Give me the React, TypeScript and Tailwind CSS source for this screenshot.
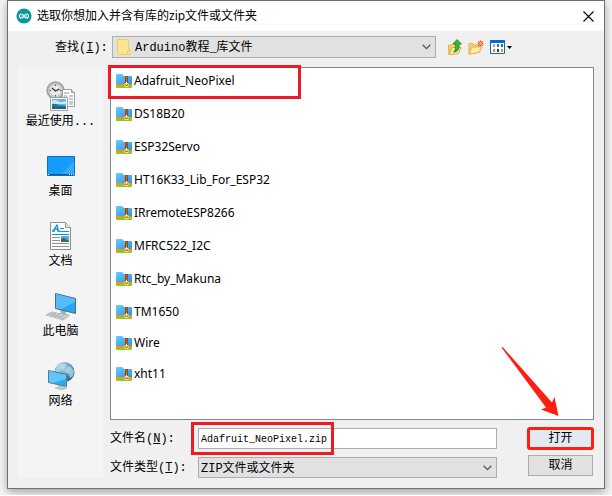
import type { ReactNode } from 'react';

const mono = "font-['Liberation_Mono','Noto_Sans_CJK_SC',monospace]";

function ArduinoLogo() {
  return (
    <svg className="size-4 shrink-0" viewBox="0 0 16 16" aria-hidden="true">
      <circle cx="8" cy="8" r="7.6" fill="#0a979b" />
      <circle cx="5.4" cy="8" r="2" fill="none" stroke="#fff" strokeWidth="1.1" />
      <circle cx="10.6" cy="8" r="2" fill="none" stroke="#fff" strokeWidth="1.1" />
      <path d="M4.600 8h1.600M9.800 8h1.600M10.600 7.200v1.600" stroke="#d7f0f0" strokeWidth=".6" />
    </svg>
  );
}

function Chevron() {
  return (
    <svg className="pointer-events-none absolute right-[5px] top-2 h-[6px] w-[9px]" viewBox="0 0 9 6" aria-hidden="true">
      <path d="M.7 .8 4.5 4.6 8.3 .8" fill="none" stroke="#555" strokeWidth="1.3" />
    </svg>
  );
}

function FolderIcon() {
  return (
    <svg className="pointer-events-none absolute left-[5px] top-[3px] h-4 w-[14px]" viewBox="0 0 14 16" aria-hidden="true">
      <path d="M.5 .5h11v10l1.500 1v4H.5z" fill="#ffe48f" stroke="#efcb62" />
      <path d="M10.500 15.500v-4l2.500-1" fill="none" stroke="#efcb62" />
    </svg>
  );
}

function ZipIcon() {
  return (
    <svg className="h-[14px] w-4 shrink-0" viewBox="0 0 16 14" aria-hidden="true">
      <defs>
        <linearGradient id="zipBlue" x1="0" y1="0" x2="1" y2="1">
          <stop offset="0" stopColor="#69cbfb" />
          <stop offset="1" stopColor="#2d95e5" />
        </linearGradient>
      </defs>
      <path d="M0 1q0-1 1-1h5l2 2h7q1 0 1 1v7H0z" fill="url(#zipBlue)" />
      <path d="M0 10h16v2H0z" fill="#f6920f" />
      <path d="M0 12h16v1q0 1-1 1H1q-1 0-1-1z" fill="#83cc2c" />
      <path d="M9 2h3v11H9z" fill="#9b4b12" />
      <path d="M10 3h1v1h-1zm0 2h1v1h-1zm0 2h1v1h-1z" fill="#c97a35" />
      <path d="M9 9.500h3v3H9z" fill="#8d5a19" stroke="#ffdf80" />
      <path d="M10 8h1v3h-1z" fill="#fff0ad" />
    </svg>
  );
}

function RecentIcon() {
  return (
    <svg className="size-8" viewBox="0 0 32 32" aria-hidden="true">
      <circle cx="10.500" cy="10.500" r="8.200" fill="#dcdeda" stroke="#a0a4a3" strokeWidth="2" />
      <circle cx="10.500" cy="10.500" r="6" fill="#e9e9e5" stroke="#bfc2c0" />
      <path d="M10.500 4.500v1.500M4.500 10.500H6M15 10.500h1.500M10.500 15v1.500" stroke="#555" />
      <path d="m7 8 3.500 3 4-2" fill="none" stroke="#333" strokeWidth="1.300" />
      <path d="M17.500 9.500h9l3 3v14h-12z" fill="#fff" stroke="#9a9da0" />
      <path d="M26.500 9.500v3h3" fill="#ddd" stroke="#9a9da0" />
      <path d="M19 13h5M19 16h3m2 0h4m-9 3h4m1 0h4m-4 3h4m-4 2h4" stroke="#8894a2" />
      <path d="M5.500 17.500h17v13h-17z" fill="#fff" stroke="#a2a2a2" />
      <path d="M7 19h14v10H7z" fill="#66b2e6" />
      <path d="M7 21q3-2 6 0t8 0v3H7z" fill="#c8e9f5" />
      <path d="M7 24q3-1 6 1l8 1v3H7z" fill="#287b77" />
      <path d="M7 27h14v2H7z" fill="#1e5c98" />
    </svg>
  );
}

function DesktopIcon() {
  return (
    <svg className="size-8" viewBox="0 0 32 32" aria-hidden="true">
      <path d="M2.500 6.500h27v19h-27z" fill="#169dfa" stroke="#0872bd" />
      <path d="M16 25 29 11v14z" fill="#35acfb" />
      <path d="M3 24h26v1H3z" fill="#075d9f" />
      <path d="M3 24.500h1m20 0h1m1 0h1m1 0h1" stroke="#fff" />
    </svg>
  );
}

function DocumentIcon() {
  return (
    <svg className="size-8" viewBox="0 0 32 32" aria-hidden="true">
      <path d="M5.500 2.500h15l5 5v22h-20z" fill="#fff" stroke="#8d8d8d" />
      <path d="M20.500 2.500v5h5" fill="#e3e3e3" stroke="#999" />
      <path d="m8 11 4-6 1.500 6M9 9h4M7 11h3m2 0h3" fill="none" stroke="#168ddb" strokeWidth="1.300" />
      <path d="M15 8.500h4m-4 3h9M7 14.500h17" stroke="#168ddb" />
      <path d="M7 17.500h8m-8 3h8m-8 3h17m-17 3h17" stroke="#929292" />
      <path d="M16 16h8v6h-8z" fill="#62a6d9" />
      <path d="m16 19 3-1 5 3v1h-8z" fill="#366a58" />
    </svg>
  );
}

function ComputerIcon() {
  return (
    <svg className="size-8" viewBox="0 0 32 32" aria-hidden="true">
      <path d="m15 20 6 1v3l4 1-6 2-6-3 3-1z" fill="#a9b0b5" />
      <path d="m10.500 3.500 20 5v15l-20-5z" fill="#28a6f4" stroke="#536b7b" />
      <path d="m11 4 19 5v3L16 19l-5-1z" fill="#54bdfb" />
      <path d="m1 25 6-3 17 4-6 4z" fill="#dce0e2" stroke="#b4babd" />
      <path d="m3 24 16 5M5 23l16 5M5 26l6-3m-2 4 6-3m-2 4 6-3" stroke="#a5abaf" strokeWidth=".8" />
    </svg>
  );
}

function NetworkIcon() {
  return (
    <svg className="size-8" viewBox="0 0 32 32" aria-hidden="true">
      <defs>
        <radialGradient id="globe" cx=".4" cy=".25" r=".8">
          <stop offset="0" stopColor="#c2e5f2" />
          <stop offset=".5" stopColor="#5d9dbe" />
          <stop offset="1" stopColor="#195979" />
        </radialGradient>
      </defs>
      <circle cx="19.500" cy="12" r="10" fill="url(#globe)" />
      <path d="m12 5 5-2 4 2-3 3-3 1-1 4-4-2zM21 9l4-3 4 5-1 5-3 2-1-4-4-2z" fill="#b3dce8" opacity=".75" />
      <path d="m13 24 5 1v2l4 1-5 2-7-2 4-1z" fill="#c0c6cb" stroke="#9ba6ad" strokeWidth=".5" />
      <path d="m3.500 10.500 18 4v12l-18-4z" fill="#2da9f1" stroke="#507d99" />
      <path d="m4 11 17 4v4L8 23l-4-1z" fill="#63c3fa" />
    </svg>
  );
}

function UpIcon() {
  return (
    <svg className="h-4 w-[14px]" viewBox="0 0 14 16" aria-hidden="true">
      <path d="M.5 6.500 4 5.500l1-1h4v9l-8 2z" fill="#f5d575" stroke="#d9ab3a" />
      <path d="m1 15.500 3-7h9l-2.500 6z" fill="#ffeeb0" stroke="#dbac38" />
      <path d="M5.500 13C8 11.500 7.500 8 7.300 5H5L9 .5 13.500 5h-2.300c.3 4-.7 8-5.700 8z" fill="#3bb52c" stroke="#1b7d1c" strokeWidth=".8" />
    </svg>
  );
}

function NewFolderIcon() {
  return (
    <svg className="h-4 w-4" viewBox="0 0 16 16" aria-hidden="true">
      <path d="M1 4.500h4l1 1.500h6v7l-11 2z" fill="#f5d575" stroke="#dfb54c" />
      <path d="m1 15 3-7h10l-3 5.500z" fill="#ffedaa" stroke="#e0b443" />
      <path d="M12.500 1.500v6M9.500 4.500h6M10.300 2.300l4.400 4.400m0-4.400-4.400 4.400" stroke="#f04a22" strokeWidth="1.200" />
      <circle cx="12.500" cy="4.500" r="1.300" fill="#ffc35c" />
    </svg>
  );
}

function ViewIcon() {
  return (
    <svg className="h-[14px] w-[22px]" viewBox="0 0 22 14" aria-hidden="true">
      <path d="M.5 .5h14v13H.5z" fill="#fff" stroke="#0868d0" />
      <path d="M0 0h15v3H0z" fill="#0868d0" />
      <path d="M3 4h2v3H3z" fill="#a89ac8" />
      <path d="M7 4h2v3H7z" fill="#2377df" />
      <path d="M11 4h2v3h-2z" fill="#118b22" />
      <path d="M3 9h2v3H3z" fill="#f0765c" />
      <path d="M7 9h2v3H7z" fill="#123a97" />
      <path d="M11 9h2v3h-2z" fill="#d09b13" />
      <path d="M17 6h5l-2.500 3z" fill="#000" />
    </svg>
  );
}

const places: { label: string; icon: ReactNode }[] = [
  { label: '最近使用...', icon: <RecentIcon /> },
  { label: '桌面', icon: <DesktopIcon /> },
  { label: '文档', icon: <DocumentIcon /> },
  { label: '此电脑', icon: <ComputerIcon /> },
  { label: '网络', icon: <NetworkIcon /> },
];

const libraries = [
  'Adafruit_NeoPixel',
  'DS18B20',
  'ESP32Servo',
  'HT16K33_Lib_For_ESP32',
  'IRremoteESP8266',
  'MFRC522_I2C',
  'Rtc_by_Makuna',
  'TM1650',
  'Wire',
  'xht11',
];

export default function App() {
  return (
    <div className="overflow-hidden bg-[#f6f6f6] px-[7px] pb-[6px] text-xs text-black">
      <section
        aria-labelledby="dialog-title"
        className="border border-[#707070] bg-[#f0f0f0] shadow-[0_3px_9px_rgba(0,0,0,0.35)]"
      >
        <header className="flex h-[30px] items-center gap-[5px] bg-white pl-2 pr-[10px]">
          <ArduinoLogo />
          <h1 id="dialog-title" className="flex-1 font-['Noto_Sans','Noto_Sans_CJK_SC',sans-serif] text-xs">
            选取你想加入并含有库的zip文件或文件夹
          </h1>
          <button aria-label="关闭" className="size-[11px]">
            <svg viewBox="0 0 11 11" className="size-[11px]" aria-hidden="true">
              <path d="m.5 .5 10 10m0-10-10 10" stroke="#000" strokeWidth="1.100" />
            </svg>
          </button>
        </header>

        <div className={`px-[10px] pb-[10px] pt-[5px] ${mono}`}>
          <div className="flex h-[22px] items-center">
            <label htmlFor="folder" className="w-[94px] pl-[37px] pt-[2px]">
              查找(<u>I</u>):
            </label>
            <div className="relative flex-1">
              <FolderIcon />
              <select
                id="folder"
                className="block h-[22px] w-full appearance-none border border-[#adadad] bg-[#e1e1e1] pl-[22px] pt-[2px]"
              >
                <option>Arduino教程_库文件</option>
              </select>
              <Chevron />
            </div>
            <div className="flex w-[158px] items-center gap-[6px] pl-3">
              <button aria-label="向上一级"><UpIcon /></button>
              <button aria-label="新建文件夹"><NewFolderIcon /></button>
              <button aria-label="查看菜单"><ViewIcon /></button>
            </div>
          </div>

          <div className="mt-[9px] flex gap-[7px]">
            <nav className="flex w-[85px] flex-col bg-[#f4f4f4] pt-[13px]">
              {places.map((place) => (
                <button key={place.label} className="flex h-[70px] flex-col items-center leading-5">
                  {place.icon}
                  <span>{place.label}</span>
                </button>
              ))}
            </nav>

            <main className="min-w-0 flex-1">
              <div className="relative border border-[#828790] bg-white pb-[19px] pl-[5px] pt-[6px] font-['Noto_Sans','Noto_Sans_CJK_SC',sans-serif]">
                <ul className="grid auto-rows-[31px] grid-rows-[repeat(7,33px)_31px] pb-[2px]">
                  {libraries.map((name) => (
                    <li key={name} className="flex items-start gap-[2px] leading-[14px]">
                      <ZipIcon />
                      {name}
                    </li>
                  ))}
                </ul>
                <div className="absolute -left-[3px] -top-[3px] h-[34px] w-[193px] border-[3px] border-[#ed1c24]" />
                <svg className="absolute bottom-[2px] right-[34px] h-[70px] w-[58px]" viewBox="0 0 58 70" aria-hidden="true">
                  <path d="M.5 .5Q1 -.5 2 .5L51 55.500 53.500 50 57.500 69 40 62.500 45 60.500Z" fill="#ff1e12" />
                </svg>
              </div>

              <div className="mt-[7px] flex gap-[30px]">
                <div className="grid flex-1 grid-cols-[88px_1fr] items-center gap-y-2 pt-px">
                  <label htmlFor="filename">文件名(<u>N</u>):</label>
                  <div className="relative">
                    <input
                      id="filename"
                      defaultValue="Adafruit_NeoPixel.zip"
                      className="block h-[21px] w-full border border-[#abadb3] bg-white pl-[2px] pt-[2px] text-[10px]"
                    />
                    <div className="pointer-events-none absolute -left-[7px] -top-[6px] h-[33px] w-[143px] border-[3px] border-[#ed1c24]" />
                  </div>
                  <label htmlFor="filetype">文件类型(<u>T</u>):</label>
                  <div className="relative">
                    <select
                      id="filetype"
                      className="block h-[21px] w-full appearance-none border border-[#adadad] bg-[#e1e1e1] pl-[2px] pt-[2px]"
                    >
                      <option>ZIP文件或文件夹</option>
                    </select>
                    <Chevron />
                  </div>
                </div>
                <div className="flex w-[67px] flex-col gap-[5px]">
                  <button className="h-[23px] rounded-[3px] border-[3px] border-[#ff1e12] bg-[#e3e9f1] leading-4">打开</button>
                  <button className="mx-px h-[21px] border border-[#adadad] bg-[#e1e1e1] leading-4">取消</button>
                </div>
              </div>
            </main>
          </div>
        </div>
      </section>
    </div>
  );
}
